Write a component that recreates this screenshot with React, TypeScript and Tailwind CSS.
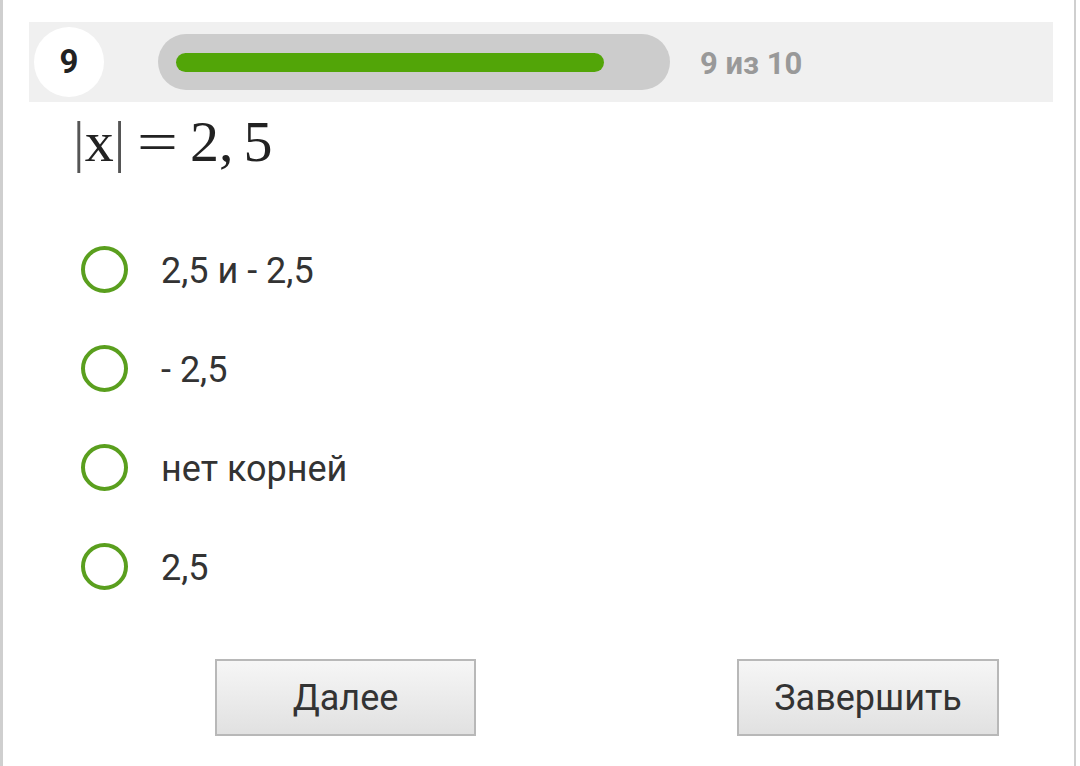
import React from "react";

const options = ["2,5 и - 2,5", "- 2,5", "нет корней", "2,5"];

export default function App() {
  return (
    <div className="w-[1080px] h-[766px] bg-white overflow-hidden" style={{ fontFamily: "Roboto, 'Noto Sans', sans-serif" }}>
      <div className="w-[1076px] h-[766px] border-l-[3px] border-r-[2px] border-[#cfcfcf] pt-[22px]">
        <div className="ml-[26px] w-[1024px] h-[80px] bg-[#f0f0f0] flex items-center">
          <div className="ml-[5px] w-[70px] h-[70px] rounded-full bg-white flex items-center justify-center text-[33px] font-bold text-[#222]">
            9
          </div>
          <div className="ml-[54px] w-[512px] h-[56px] rounded-full bg-[#cccccc] flex items-center px-[18px]">
            <div className="w-[428px] h-[19px] rounded-full bg-[#52a508]" />
          </div>
          <div className="ml-[30px] text-[31px] font-bold text-[#999999] leading-none pt-[2px]">9 из 10</div>
        </div>
        <div className="h-[118px] pl-[70px] pt-[8px]">
          <div className="text-[58px] leading-[64px] text-[#222] whitespace-nowrap" style={{ fontFamily: "'Liberation Serif', serif" }}>
            <span className="text-[#555]">|</span>x<span className="text-[#555]">|</span>
            <span className="inline-block ml-[16px] mr-[16px] scale-x-[1.25]">=</span>2,<span className="ml-[10px]">5</span>
          </div>
        </div>
        <div className="flex flex-col">
          {options.map((o) => (
            <div key={o} className="h-[99px] flex items-center pl-[78px]">
              <div className="w-[47px] h-[47px] rounded-full border-[4px] border-[#5a9f1e]" />
              <div className="ml-[33px] text-[36px] text-[#333] pt-[3px]">{o}</div>
            </div>
          ))}
        </div>
        <div className="flex mt-[43px]">
          <button className="ml-[212px] w-[261px] h-[77px] border-[2px] border-[#b8b8b8] bg-gradient-to-b from-[#f6f6f6] to-[#e1e1e1] text-[36px] text-[#333]">
            Далее
          </button>
          <button className="ml-[261px] w-[262px] h-[77px] border-[2px] border-[#b8b8b8] bg-gradient-to-b from-[#f6f6f6] to-[#e1e1e1] text-[36px] text-[#333]">
            Завершить
          </button>
        </div>
      </div>
    </div>
  );
}
